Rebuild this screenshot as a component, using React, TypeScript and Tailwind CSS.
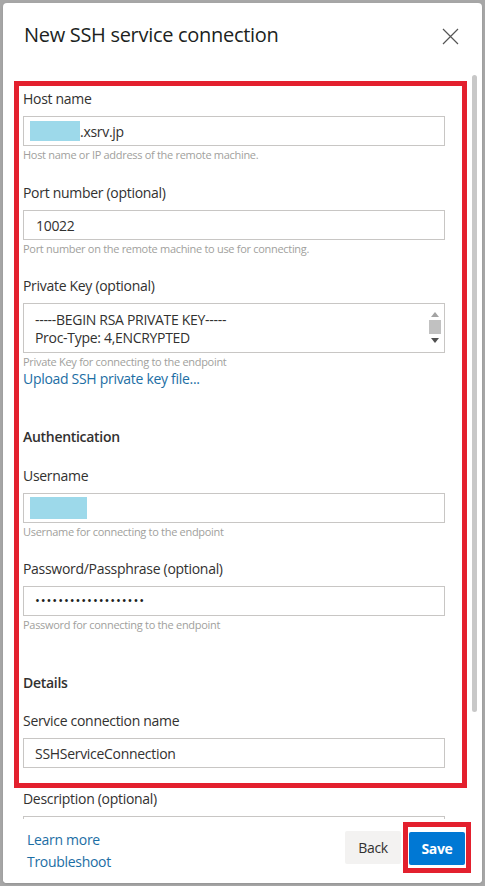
import React from "react";

function Field({
  label,
  help,
  children,
  className = "",
}: {
  label: string;
  help?: string;
  children: React.ReactNode;
  className?: string;
}) {
  return (
    <div className={className}>
      <div className="text-[14px] leading-[20px] text-[#323130]">{label}</div>
      <div className="mt-[7px]">{children}</div>
      {help && (
        <div className="mt-[1px] text-[11px] leading-[16px] text-[#a19f9d]">{help}</div>
      )}
    </div>
  );
}

function Box({ children }: { children?: React.ReactNode }) {
  return (
    <div className="h-[30px] w-[422px] border border-[#c8c6c4] bg-white flex items-center text-[14px] text-[#323130]">
      {children}
    </div>
  );
}

export default function App() {
  return (
    <div className="w-[485px] h-[886px] bg-[#a7a7a7] p-[3px] font-['Open_Sans',sans-serif] tracking-[-0.3px] overflow-hidden">
      <div className="h-full bg-white rounded-[4px] flex flex-col overflow-hidden shadow">
        {/* header */}
        <div className="h-[72px] shrink-0 flex items-start justify-between pl-[21px] pr-[23px] pt-[19px]">
          <h1 className="text-[20px] leading-[26px] font-normal text-[#201f1e]">New SSH service connection</h1>
          <svg width="17" height="17" viewBox="0 0 17 17" className="mt-[6px]">
            <path d="M1 1L16 16M16 1L1 16" stroke="#555" strokeWidth="1.2" />
          </svg>
        </div>

        {/* body */}
        <div className="relative flex-1 overflow-hidden">
          <div className="ml-[11px] mt-[6px] w-[453px] border-[5px] border-[#e3202e] pl-[4px] pt-[3px] pb-[15px]">
            <Field label="Host name" help="Host name or IP address of the remote machine.">
              <Box>
                <span className="ml-[6px] w-[50px] h-[20px] bg-[#9dd9ea]" />
                <span>.xsrv.jp</span>
              </Box>
            </Field>

            <Field label="Port number (optional)" help="Port number on the remote machine to use for connecting." className="mt-[20px]">
              <Box>
                <span className="pl-[12px]">10022</span>
              </Box>
            </Field>

            <Field label="Private Key (optional)" help="Private Key for connecting to the endpoint" className="mt-[19px]">
              <div className="h-[50px] w-[422px] border border-[#c8c6c4] flex text-[14px] text-[#323130]">
                <div className="flex-1 pl-[11px] pt-[7px] leading-[18px]">
                  <div>-----BEGIN RSA PRIVATE KEY-----</div>
                  <div>Proc-Type: 4,ENCRYPTED</div>
                </div>
                <div className="w-[14px] mr-[2px] flex flex-col items-center pt-[8px]">
                  <svg width="8" height="5" viewBox="0 0 8 5">
                    <path d="M0 5L4 0L8 5Z" fill="#a3a3a3" />
                  </svg>
                  <div className="mt-[3px] w-[12px] h-[14px] bg-[#c1c1c1]" />
                  <svg width="8" height="5" viewBox="0 0 8 5" className="mt-[4px]">
                    <path d="M0 0L8 0L4 5Z" fill="#505050" />
                  </svg>
                </div>
              </div>
            </Field>
            <div className="text-[14px] leading-[18px] text-[#1c6ea4]">Upload SSH private key file...</div>

            <div className="mt-[39px] text-[14px] leading-[20px] font-semibold text-[#323130]">Authentication</div>

            <Field label="Username" help="Username for connecting to the endpoint" className="mt-[19px]">
              <Box>
                <span className="ml-[6px] w-[57px] h-[22px] bg-[#9dd9ea]" />
              </Box>
            </Field>

            <Field label="Password/Passphrase (optional)" help="Password for connecting to the endpoint" className="mt-[19px]">
              <Box>
                <span className="pl-[11px] text-[13px] tracking-[0.9px] text-[#201f1e]">•••••••••••••••••••</span>
              </Box>
            </Field>

            <div className="mt-[40px] text-[14px] leading-[20px] font-semibold text-[#323130]">Details</div>

            <Field label="Service connection name" className="mt-[18px]">
              <Box>
                <span className="pl-[11px]">SSHServiceConnection</span>
              </Box>
            </Field>
          </div>

          <div className="ml-[20px] mt-[1px]">
            <Field label="Description (optional)">
              <Box />
            </Field>
          </div>

          {/* scrollbar thumb */}
          <div className="absolute right-[5px] top-0 w-[5px] h-[637px] rounded-full bg-[#c8c8c8]" />
        </div>

        {/* footer */}
        <div className="h-[64px] shrink-0 bg-white flex justify-between pl-[24px] pr-[11px]">
          <div className="mt-[10px] text-[14px] leading-[22px] text-[#1c6ea4]">
            <div>Learn more</div>
            <div>Troubleshoot</div>
          </div>
          <div className="mt-[3px] flex items-center self-start gap-[2px]">
            <button className="h-[33px] w-[56px] bg-[#f3f2f1] text-[14px] text-[#323130] rounded-[2px]">Back</button>
            <div className="border-[5px] border-[#e3202e] pt-[5px] pb-[3px] px-[1px]">
              <button className="h-[33px] w-[56px] bg-[#0078d4] text-[14px] font-bold text-white rounded-[2px]">Save</button>
            </div>
          </div>
        </div>
      </div>
    </div>
  );
}
